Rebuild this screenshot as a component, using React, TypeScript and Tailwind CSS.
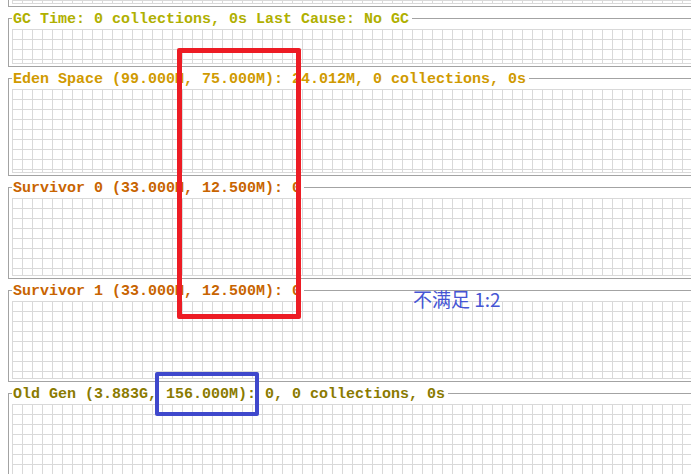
import React from "react";

const GRID =
  "w-full border-b border-[#d9d9d9] bg-[linear-gradient(to_right,#d9d9d9_1px,transparent_1px),linear-gradient(to_bottom,#d9d9d9_1px,transparent_1px)] bg-[size:10px_10px]";

type PanelProps = {
  title: string;
  color: string;
  gridH: string;
};

function Panel({ title, color, gridH }: PanelProps) {
  return (
    <fieldset className="ml-2 w-[760px] min-w-0 shrink-0 border border-[#a3a3a3] pl-[3px] pr-0 pb-[2px]">
      <legend
        className={`pl-px pr-[3px] text-[15px] leading-[13px] font-bold whitespace-pre ${color}`}
      >
        <span className="relative top-px">{title}</span>
      </legend>
      <div className={`mt-[4px] ${GRID} ${gridH}`} />
    </fieldset>
  );
}

export default function App() {
  return (
    <div className="relative w-[691px] h-[474px] overflow-hidden bg-white font-['Liberation_Mono',monospace] flex flex-col gap-[5px]">
      <div className="ml-2 w-[760px] h-[7px] shrink-0 border-l border-b border-[#a3a3a3] pl-[3px]">
        <div className={`${GRID} h-[4px]`} />
      </div>

      <Panel
        gridH="h-[35px]"
        color="text-[#b0b000]"
        title="GC Time: 0 collections, 0s Last Cause: No GC"
      />
      <Panel
        gridH="h-[84px]"
        color="text-[#d09a00]"
        title="Eden Space (99.000M, 75.000M): 24.012M, 0 collections, 0s"
      />
      <Panel
        gridH="h-[78px]"
        color="text-[#c86400]"
        title="Survivor 0 (33.000M, 12.500M): 0"
      />
      <Panel
        gridH="h-[78px]"
        color="text-[#c86400]"
        title="Survivor 1 (33.000M, 12.500M): 0"
      />
      <Panel
        gridH="h-[100px]"
        color="text-[#8a7a00]"
        title="Old Gen (3.883G, 156.000M): 0, 0 collections, 0s"
      />

      <div className="absolute left-[177px] top-[48px] w-[124px] h-[271px] border-[5px] border-[#ed1c24] rounded-[2px]" />
      <div className="absolute left-[155px] top-[372px] w-[104px] h-[44px] border-4 border-[#3f48cc] rounded-[2px]" />
      <div className="absolute left-[413px] top-[287px] text-[19px] leading-[24px] text-[#4655d4] whitespace-pre font-['Noto_Sans_CJK_SC','Noto_Sans',sans-serif]">
        不满足 1:2
      </div>
    </div>
  );
}
